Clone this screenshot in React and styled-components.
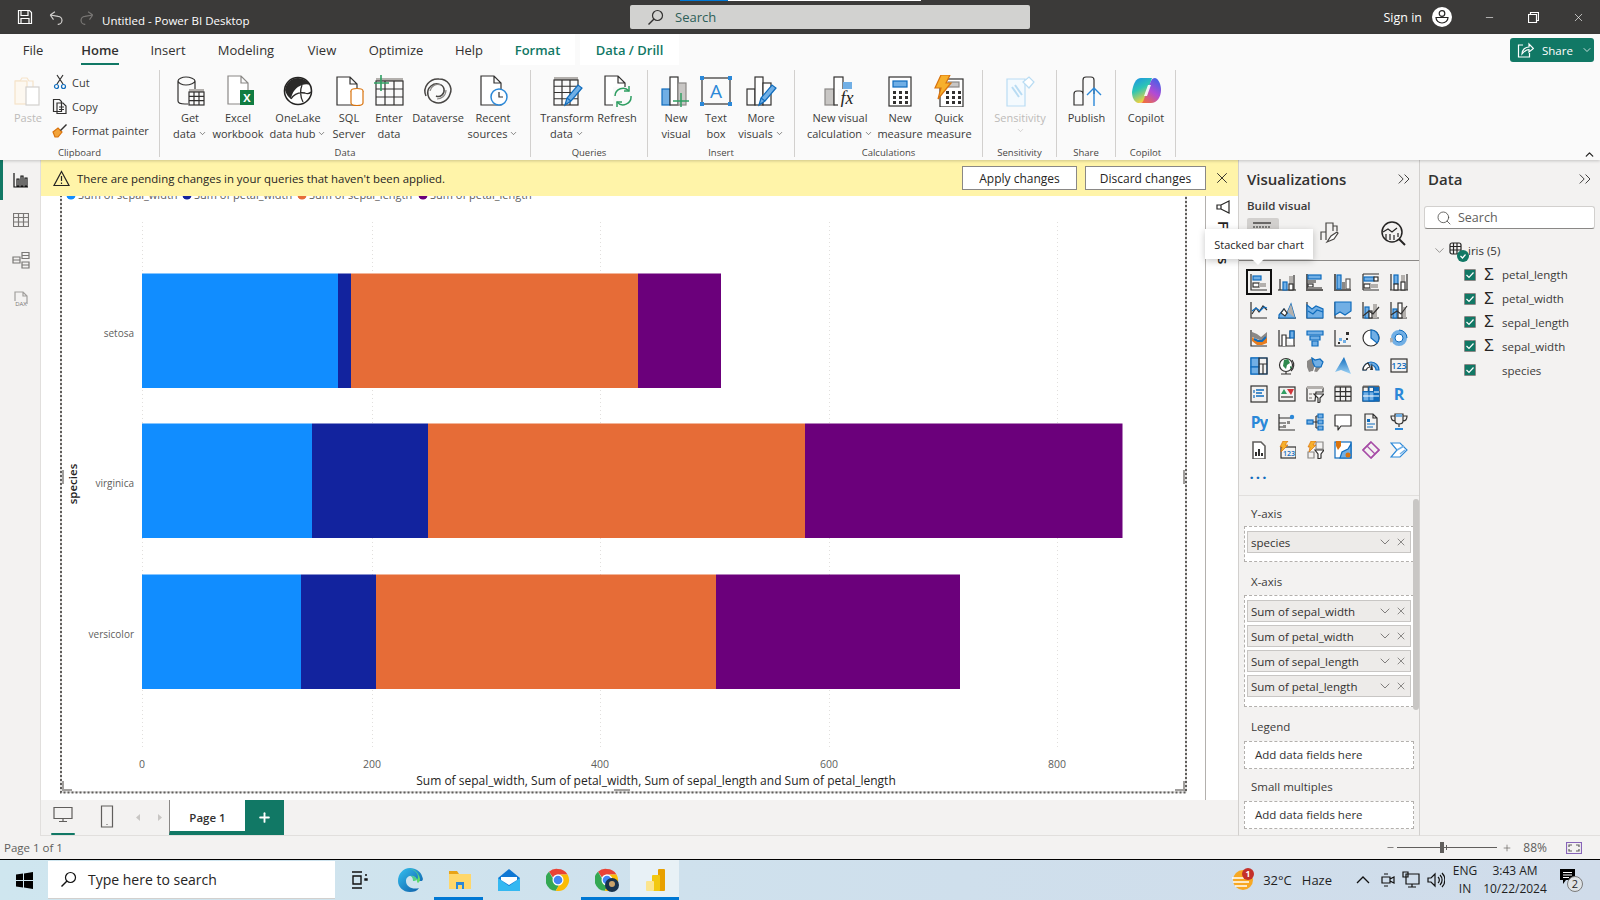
import React from 'react'
import styled, { createGlobalStyle } from 'styled-components'
import { X, ChevronDown, ChevronUp, ChevronsRight, Search, Minus, Plus } from 'lucide-react'

const TEAL = '#117865'
const D = '#323130'
const B = '#0f6cbd'
const L = '#71afe5'
const G = '#b3b0ad'
const O = '#d9730d'
const FONT = '"Open Sans", "Noto Sans", sans-serif'

const GlobalStyle = createGlobalStyle`
  html, body { margin: 0; padding: 0; height: 100%; overflow: hidden; }
  body { font-family: ${FONT}; color: #252423; background: #fff; }
  * { box-sizing: border-box; }
`

const Page = styled.div`
  width: 1600px;
  height: 900px;
  display: flex;
  flex-direction: column;
  overflow: hidden;
`

/* title bar */
const TitleBar = styled.header`
  height: 34px;
  flex: none;
  background: #3b3a39;
  display: flex;
  align-items: center;
  color: #fff;
  position: relative;
`
const TitleTools = styled.div`
  display: flex;
  align-items: center;
  gap: 15px;
  padding-left: 17px;
  width: 102px;
  flex: none;
`
const TitleText = styled.div`
  width: 528px;
  flex: none;
  font-size: 11.5px;
  padding-top: 6px;
`
const SearchBox = styled.div`
  width: 400px;
  height: 24px;
  flex: none;
  background: #d2d2d0;
  border-radius: 2px;
  color: #2d5f58;
  font-size: 13px;
  display: flex;
  align-items: center;
  gap: 11px;
  padding-left: 17px;
`
const Progress = styled.div`
  position: absolute;
  left: 680px;
  top: 0;
  width: 241px;
  height: 1px;
  background: linear-gradient(90deg, #0078d4 0 48px, #fff 48px);
`
const SignIn = styled.div`
  margin-left: auto;
  display: flex;
  align-items: center;
  font-size: 12.5px;
  gap: 10px;
`
const WinButtons = styled.div`
  display: flex;
  align-items: center;
  gap: 33px;
  margin-left: 32px;
  padding-right: 15px;
`

/* ribbon */
const Ribbon = styled.section`
  height: 126px;
  flex: none;
  background: #fafafa;
  position: relative;
  box-shadow: 0 1px 3px rgba(0, 0, 0, 0.2);
  z-index: 2;
`
const TabRow = styled.nav`
  display: flex;
  height: 31px;
`
const Tab = styled.div`
  width: ${(p) => p.$w}px;
  margin-left: ${(p) => p.$ml || 0}px;
  flex: none;
  display: flex;
  justify-content: center;
  font-size: 13px;
  background: ${(p) => (p.$accent ? '#fff' : 'transparent')};
  color: ${(p) => (p.$accent ? TEAL : '#323130')};
  font-weight: ${(p) => (p.$accent ? 600 : 400)};
`
const TabLabel = styled.span`
  height: 31px;
  line-height: 32px;
  font-weight: ${(p) => (p.$active ? 600 : 'inherit')};
  border-bottom: 2px solid ${(p) => (p.$active ? TEAL : 'transparent')};
`
const ShareButton = styled.div`
  position: absolute;
  left: 1510px;
  top: 4px;
  width: 84px;
  height: 24px;
  background: ${TEAL};
  border-radius: 3px;
  color: #fff;
  font-size: 11.5px;
  display: flex;
  align-items: center;
  gap: 8px;
  padding-left: 7px;
`
const Collapse = styled.div`
  position: absolute;
  left: 1583px;
  top: 110px;
  color: #252423;
`
const GroupRow = styled.div`
  display: flex;
  margin-top: 5px;
  height: 87px;
`
const Group = styled.div`
  width: ${(p) => p.$w}px;
  flex: none;
  border-right: 1px solid #d2d0ce;
  display: flex;
  flex-direction: column;
`
const GroupItems = styled.div`
  height: 77px;
  flex: none;
  display: flex;
  padding-left: ${(p) => p.$pad || 0}px;
`
const GroupLabel = styled.div`
  font-size: 9.5px;
  line-height: 11px;
  text-align: center;
  color: #484644;
  flex: none;
`
const RibbonBtn = styled.div`
  width: ${(p) => p.$w}px;
  flex: none;
  display: flex;
  flex-direction: column;
  align-items: center;
  padding-top: 5px;
  color: ${(p) => (p.$off ? '#bdbbb9' : '#3b3a39')};
`
const RibbonIcon = styled.div`
  height: 34.5px;
  flex: none;
  display: flex;
  align-items: flex-start;
`
const BtnLine = styled.div`
  font-size: 11px;
  line-height: 16px;
  white-space: nowrap;
  display: flex;
  align-items: center;
  gap: 2px;
`
const SmallCol = styled.div`
  display: flex;
  flex-direction: column;
  gap: 4px;
  padding: 2px 0 0 4px;
`
const SmallBtn = styled.div`
  height: 20px;
  display: flex;
  align-items: center;
  gap: 4px;
  font-size: 11px;
  color: #3b3a39;
  white-space: nowrap;
`

/* main */
const Body = styled.main`
  flex: 1;
  min-height: 0;
  display: flex;
`
const Rail = styled.aside`
  width: 41px;
  flex: none;
  background: #f3f2f1;
  border-right: 1px solid #e1dfdd;
  display: flex;
  flex-direction: column;
`
const RailItem = styled.div`
  height: 40px;
  display: flex;
  align-items: center;
  justify-content: center;
  border-left: 3px solid ${(p) => (p.$active ? TEAL : 'transparent')};
  padding-right: 2px;
`
const Center = styled.div`
  width: 1197px;
  flex: none;
  display: flex;
  flex-direction: column;
`
const Banner = styled.div`
  height: 36px;
  flex: none;
  background: #fff4a9;
  display: flex;
  align-items: center;
  padding-left: 12px;
  font-size: 11.4px;
`
const BannerText = styled.span`
  margin-left: 7px;
  width: 885px;
  flex: none;
`
const BannerBtn = styled.button`
  width: ${(p) => p.$w}px;
  height: 24px;
  flex: none;
  margin-right: 8px;
  background: #fff;
  border: 1px solid #8a8886;
  font: 12px ${FONT};
  color: #252423;
  padding: 0;
`
const BannerClose = styled.div`
  margin-left: -1px;
  display: flex;
`
const CanvasRow = styled.div`
  flex: 1;
  min-height: 0;
  display: flex;
  background: #fff;
`
const ChartSvg = styled.svg`
  width: 1164px;
  height: 604px;
  flex: none;
  display: block;
  font-family: ${FONT};
`
const FilterStrip = styled.div`
  flex: 1;
  border-left: 1px solid #b3b0ad;
  padding: 4px 0 0 10px;
  display: flex;
  flex-direction: column;
  align-items: flex-start;
  gap: 6px;
`
const FilterText = styled.div`
  writing-mode: vertical-rl;
  font-size: 14.5px;
  font-weight: 600;
  line-height: 15px;
  color: #252423;
`
const PageBar = styled.div`
  height: 36px;
  flex: none;
  background: #f3f2f1;
  border-bottom: 1px solid #e1dfdd;
  display: flex;
`
const ViewBtn = styled.div`
  width: 44px;
  flex: none;
  display: flex;
  flex-direction: column;
  align-items: center;
  padding-top: 5px;
`
const ViewMark = styled.div`
  width: 24px;
  height: 2px;
  margin-top: 8px;
  border-radius: 1px;
  background: ${TEAL};
`
const PageNav = styled.div`
  width: 40px;
  flex: none;
  display: flex;
  align-items: center;
  justify-content: center;
  gap: 14px;
`
const PageTab = styled.div`
  width: 76px;
  flex: none;
  background: #fff;
  border-left: 1px solid #8a8886;
  border-bottom: 4px solid ${TEAL};
  font-size: 11.5px;
  font-weight: 600;
  display: flex;
  align-items: center;
  justify-content: center;
  padding-top: 3px;
  color: #323130;
`
const AddPage = styled.div`
  width: 39px;
  flex: none;
  background: ${TEAL};
  color: #fff;
  display: flex;
  align-items: center;
  justify-content: center;
`

/* panes */
const Pane = styled.aside`
  width: 181px;
  flex: none;
  background: #f3f2f1;
  border-left: 1px solid #d2d0ce;
  border-bottom: 1px solid #e1dfdd;
  position: relative;
  overflow: hidden;
`
const PaneHead = styled.div`
  height: 38px;
  display: flex;
  align-items: center;
  justify-content: space-between;
  padding: 0 5px 0 8px;
  font-size: 15px;
  font-weight: 600;
  color: #323130;
`
const BuildTitle = styled.div`
  font-size: 11.5px;
  font-weight: 600;
  padding-left: 8px;
  color: #3b3a39;
  line-height: 16px;
`
const BuildTabs = styled.div`
  height: 47px;
  display: flex;
  align-items: flex-start;
  padding-top: 4px;
  border-bottom: 1px solid #8a8886;
`
const BuildTab = styled.div`
  width: ${(p) => p.$w}px;
  margin-left: ${(p) => p.$ml}px;
  height: 32px;
  flex: none;
  background: ${(p) => (p.$on ? '#d2d0ce' : 'transparent')};
  border-radius: 2px;
  display: flex;
  justify-content: center;
  padding-top: 2px;
`
const VizGrid = styled.div`
  display: grid;
  grid-template-columns: repeat(6, 28px);
  grid-auto-rows: 28px;
  padding: 7px 0 0 6px;
  height: 235px;
  border-bottom: 1px solid #e1dfdd;
`
const VizCell = styled.div`
  display: flex;
  align-items: center;
  justify-content: center;
`
const VizSelected = styled(VizCell)`
  outline: 2px solid #111;
  outline-offset: -3px;
`
const MoreDots = styled.div`
  grid-column: 1;
  font-size: 15px;
  font-weight: 700;
  letter-spacing: 2px;
  color: #0f6cbd;
  text-align: center;
  line-height: 18px;
`
const Wells = styled.div`
  padding: 9px 6px 0 5px;
`
const WellTitle = styled.div`
  font-size: 11.5px;
  line-height: 18px;
  padding-left: 7px;
  margin-bottom: ${(p) => p.$mb}px;
  color: #3b3a39;
`
const Well = styled.div`
  background: #fff;
  border: 1px dashed #b3b0ad;
  width: 170px;
  padding: 4px 2px 0;
  height: ${(p) => p.$h}px;
  margin-bottom: ${(p) => p.$mb}px;
`
const EmptyWell = styled(Well)`
  padding: 5px 0 0 10px;
  font-size: 11.5px;
  color: #323130;
  line-height: 16px;
`
const Chip = styled.div`
  height: 22px;
  margin-bottom: 3px;
  background: #edebe9;
  border: 1px solid #c8c6c4;
  display: flex;
  align-items: center;
  padding: 0 3px 0 3px;
  font-size: 11.5px;
  color: #323130;
`
const ChipName = styled.span`
  flex: 1;
  white-space: nowrap;
`
const ChipIcons = styled.span`
  display: flex;
  align-items: center;
  gap: 2px;
  color: #484644;
`
const ScrollThumb = styled.div`
  position: absolute;
  left: 174px;
  top: 339px;
  width: 6px;
  height: 211px;
  border-radius: 3px;
  background: #c8c6c4;
`
const DataSearch = styled.div`
  margin: 8px 5px 0 4px;
  height: 23px;
  background: #fff;
  border: 1px solid #d2d0ce;
  border-bottom-color: #8a8886;
  border-radius: 3px;
  display: flex;
  align-items: center;
  gap: 6px;
  padding-left: 11px;
  font-size: 12.5px;
  color: #605e5c;
`
const TreeHead = styled.div`
  display: flex;
  align-items: center;
  height: 25px;
  margin-top: 9px;
  padding-left: 12px;
  font-size: 11.5px;
  color: #323130;
`
const TableMark = styled.span`
  position: relative;
  width: 18px;
  height: 18px;
  margin: 0 1px 0 2px;
  display: block;
`
const TableBadge = styled.span`
  position: absolute;
  left: 8px;
  top: 8px;
  width: 12px;
  height: 12px;
  border-radius: 50%;
  background: ${TEAL};
  display: flex;
  align-items: center;
  justify-content: center;
`
const FieldRow = styled.div`
  display: flex;
  align-items: center;
  height: 23.8px;
  padding-left: 44px;
  font-size: 11.5px;
  color: #3b3a39;
`
const CheckMark = styled.span`
  width: 12px;
  height: 12px;
  background: ${TEAL};
  border: 1px solid #8a8886;
  border-radius: 1px;
  display: flex;
  align-items: center;
  justify-content: center;
  flex: none;
`
const Sigma = styled.span`
  width: 26px;
  text-align: center;
  font-family: "Liberation Sans", sans-serif;
  font-size: 16px;
  flex: none;
  color: #252423;
`

/* tooltip */
const Tooltip = styled.div`
  position: absolute;
  left: 1205px;
  top: 229px;
  width: 108px;
  height: 30px;
  background: #fff;
  box-shadow: 0 2px 7px rgba(0, 0, 0, 0.22);
  font-size: 11px;
  display: flex;
  align-items: center;
  justify-content: center;
  white-space: nowrap;
  z-index: 5;
  &::after {
    content: '';
    position: absolute;
    left: 47px;
    bottom: -6px;
    border: 6px solid transparent;
    border-bottom: 0;
    border-top-color: #fff;
  }
`

/* status bar */
const StatusBar = styled.footer`
  height: 23px;
  flex: none;
  background: #f3f2f1;
  display: flex;
  align-items: center;
  padding-left: 4px;
  font-size: 11.5px;
  color: #605e5c;
`
const ZoomArea = styled.div`
  margin-left: auto;
  display: flex;
  align-items: center;
  color: #605e5c;
`
const ZoomTrack = styled.div`
  width: 100px;
  height: 1px;
  margin: 0 5px 0 2px;
  background: #605e5c;
  position: relative;
  &::before {
    content: '';
    position: absolute;
    left: 43px;
    top: -5px;
    width: 4px;
    height: 11px;
    background: #605e5c;
  }
  &::after {
    content: '';
    position: absolute;
    left: 49px;
    top: -2px;
    width: 1px;
    height: 5px;
    background: #605e5c;
  }
`
const ZoomPct = styled.span`
  font-size: 12px;
  margin: 0 19px 0 11px;
`
const FitBtn = styled.span`
  display: flex;
  margin-right: 18px;
`

/* taskbar */
const Taskbar = styled.footer`
  height: 41px;
  flex: none;
  border-top: 1px solid #000;
  background: linear-gradient(90deg, #cfe6ef, #cfdfec 60%, #d0dcea);
  display: flex;
  align-items: stretch;
`
const StartBtn = styled.div`
  width: 48px;
  flex: none;
  display: flex;
  align-items: center;
  justify-content: center;
`
const TaskSearch = styled.div`
  width: 287px;
  flex: none;
  margin: 1px 0;
  background: #fff;
  display: flex;
  align-items: center;
  gap: 11px;
  padding-left: 12px;
  font-size: 14px;
  color: #252423;
  border-bottom: 1px solid #d2d0ce;
`
const TaskIcon = styled.div`
  width: 49px;
  flex: none;
  display: flex;
  align-items: center;
  justify-content: center;
  margin-left: ${(p) => p.$ml || 0}px;
  padding-right: ${(p) => p.$pr || 0}px;
  padding-left: ${(p) => p.$pl || 0}px;
  background: ${(p) => (p.$active ? '#e8f1f6' : 'transparent')};
  border-bottom: 3px solid ${(p) => (p.$on ? '#0078d4' : 'transparent')};
  border-top: 3px solid transparent;
`
const Tray = styled.div`
  margin-left: auto;
  display: flex;
  align-items: center;
  font-size: 13px;
  color: #1f1f1f;
`
const TrayText = styled.span`
  margin-left: ${(p) => p.$ml}px;
  white-space: nowrap;
`
const TrayIcon = styled.span`
  display: flex;
  margin-left: ${(p) => p.$ml}px;
`
const Clock = styled.div`
  width: ${(p) => p.$w}px;
  margin-left: ${(p) => p.$ml}px;
  flex: none;
  font-size: 12px;
  line-height: 18px;
  text-align: center;
  white-space: nowrap;
`
const NoteBadge = styled.span`
  position: absolute;
  left: 8px;
  top: 8px;
  width: 16px;
  height: 16px;
  border-radius: 50%;
  background: #dfe3e6;
  border: 1px solid #7a7a7a;
  font-size: 11px;
  line-height: 14px;
  text-align: center;
`
const NoteWrap = styled.span`
  position: relative;
  width: 24px;
  height: 24px;
  margin: 0 17px 0 11px;
  display: block;
`

/* small svg helper */
const Ic = ({ s = 32, vb = 32, children, ...rest }) => (
  <svg width={s} height={s} viewBox={`0 0 ${vb} ${vb}`} fill="none" strokeWidth="1.2" {...rest}>
    {children}
  </svg>
)

const Grid = ({ x, y, w, h, c = 3, r = 3, stroke = D, head }) => {
  const lines = []
  for (let i = 1; i < c; i++) lines.push(`M${x + (w * i) / c} ${y}v${h}`)
  for (let i = 1; i < r; i++) lines.push(`M${x} ${y + (h * i) / r}h${w}`)
  return (
    <g stroke={stroke}>
      {head && <rect x={x} y={y - 3} width={w} height="3" fill={G} stroke="none" />}
      <rect x={x} y={y} width={w} height={h} />
      <path d={lines.join('')} />
    </g>
  )
}

const Doc = ({ x = 6, y = 2, w = 18, h = 27, stroke = D }) => (
  <path
    d={`M${x} ${y}h${w - 7}l7 7v${h - 7}h-${w}zM${x + w - 7} ${y}v7h7`}
    stroke={stroke}
    fill="#fff"
  />
)

const Pencil = () => (
  <g>
    <path d="M14 30l2-7L27 10l4 3-11 13z" fill={L} stroke={B} />
    <path d="M16 23l4 3" stroke={B} />
  </g>
)

const CopilotLogo = () => (
  <Ic>
    <defs>
      <linearGradient id="cpA" x1="0" y1="0" x2="0.4" y2="1">
        <stop offset="0" stopColor="#1b8fe8" />
        <stop offset="0.5" stopColor="#2cc5b5" />
        <stop offset="1" stopColor="#f6d23c" />
      </linearGradient>
      <linearGradient id="cpB" x1="0.8" y1="0" x2="0.2" y2="1">
        <stop offset="0" stopColor="#3f63e6" />
        <stop offset="0.5" stopColor="#b14ad6" />
        <stop offset="1" stopColor="#f2703c" />
      </linearGradient>
    </defs>
    <path d="M11 3h11l-7 21c-1 3-3 4-6 4H8c-4-1-6-6-6-11C3 9 6 3 11 3z" fill="url(#cpA)" />
    <path d="M21 28H10c2 0 3-1 4-4l7-18c1-2 2-3 4-3 4 1 6 7 6 12 0 7-4 13-10 13z" fill="url(#cpB)" />
    <path d="M14 21l4-11h3l-4 11z" fill="#fff" opacity="0.9" />
  </Ic>
)

const RIBBON = {
  paste: (
    <Ic>
      <path d="M3 6h5l2-3h5l2 3h4v6" stroke="#f6e3c9" />
      <rect x="3" y="6" width="12" height="23" stroke="#f6e3c9" fill="#fdf8f0" />
      <rect x="14" y="12" width="13" height="18" stroke="#d2d0ce" fill="#fff" />
    </Ic>
  ),
  get: (
    <Ic>
      <path d="M4 6v20c0 2 3 3 7 3h3M4 6c0-2 4-4 8-4s9 2 9 4-5 4-9 4-8-2-8-4zM21 6v9" stroke={D} />
      <Grid x={15} y={17} w={15} h={13} c={3} r={3} head />
    </Ic>
  ),
  excel: (
    <Ic>
      <Doc x={6} y={1} w={20} h={28} stroke="#8a8886" />
      <rect x="18" y="15" width="14" height="15" fill="#107c41" />
      <text x="25" y="27" fontSize="11" fontWeight="700" fill="#fff" textAnchor="middle">X</text>
    </Ic>
  ),
  lake: (
    <Ic>
      <circle cx="16" cy="16" r="13.5" stroke="#252423" strokeWidth="1.6" fill="#fff" />
      <path d="M16 3C9 3 4 8 3 15c1 4 3 7 6 9 1-7 5-12 11-14 3-1 6-1 8 0-2-4-7-7-12-7z" fill="#2b2a29" />
      <path d="M9 24c3-5 8-7 14-6M23 18c2 1 4 1 6-1M20 10c-2 5-2 11 1 17" stroke="#2b2a29" strokeWidth="1.3" />
    </Ic>
  ),
  sql: (
    <Ic>
      <Doc x={4} y={2} w={20} h={28} />
      <ellipse cx="24" cy="16" rx="6" ry="2.5" fill="#fff" stroke={O} />
      <path d="M18 16v12c0 1.5 3 2.5 6 2.5s6-1 6-2.5V16" stroke={O} fill="#fff" />
    </Ic>
  ),
  enter: (
    <Ic>
      <Grid x={3} y={6} w={27} h={24} c={3} r={3} head />
      <path d="M8 0v16M1 8h15" stroke="#2f9e62" strokeWidth="1.6" />
    </Ic>
  ),
  dataverse: (
    <Ic>
      <path d="M4 21C0 12 8 3 17 4c9 0 14 8 11 15-2 7-10 11-16 8-6-2-9-11-3-16 5-4 12-2 13 3 1 5-4 9-8 7" stroke="#484644" strokeWidth="1.5" />
      <path d="M8 16c1-5 6-8 11-6M24 15c0 6-5 9-9 9" stroke="#8a8886" />
    </Ic>
  ),
  recent: (
    <Ic>
      <Doc x={4} y={1} w={20} h={29} />
      <circle cx="22" cy="22" r="8" fill="#fff" stroke="#2b88d8" strokeWidth="1.5" />
      <path d="M22 17v5h4" stroke={D} />
    </Ic>
  ),
  transform: (
    <Ic>
      <Grid x={3} y={5} w={24} h={25} c={3} r={4} head />
      <Pencil />
    </Ic>
  ),
  refresh: (
    <Ic>
      <Doc x={4} y={1} w={20} h={29} />
      <rect x="12" y="12" width="20" height="20" fill="#fafafa" />
      <path d="M14 21a8 8 0 0 1 14-5M30 21a8 8 0 0 1-14 6" stroke="#2f9e62" strokeWidth="1.5" />
      <path d="M28 11v5h-5M16 32v-5h5" stroke="#2f9e62" strokeWidth="1.5" />
    </Ic>
  ),
  newVisual: (
    <Ic>
      <rect x="2" y="14" width="8" height="16" fill={L} stroke={B} />
      <rect x="10" y="2" width="8" height="28" fill="#fff" stroke={D} />
      <rect x="18" y="8" width="8" height="22" fill="#c8c6c4" stroke="#8a8886" />
      <path d="M21 18v16M13 26h16" stroke="#2f9e62" strokeWidth="1.5" />
    </Ic>
  ),
  textBox: (
    <Ic>
      <rect x="2" y="3" width="28" height="26" stroke={D} />
      <path d="M0 1h4v4H0zM28 1h4v4h-4zM0 27h4v4H0zM28 27h4v4h-4z" fill="#2b88d8" stroke="none" />
      <text x="16" y="23" fontSize="19" fill="#2b88d8" textAnchor="middle">A</text>
    </Ic>
  ),
  more: (
    <Ic>
      <rect x="2" y="14" width="8" height="16" stroke={D} />
      <rect x="10" y="2" width="8" height="28" stroke={D} fill="#fff" />
      <rect x="18" y="8" width="8" height="22" stroke={D} fill="#fff" />
      <Pencil />
    </Ic>
  ),
  calc: (
    <Ic>
      <rect x="1" y="14" width="9" height="16" fill="#c8c6c4" stroke="#8a8886" />
      <rect x="10" y="2" width="9" height="28" fill="#fff" stroke={D} />
      <rect x="19" y="7" width="9" height="23" fill={L} stroke="none" />
      <rect x="14" y="14" width="18" height="18" fill="#fafafa" />
      <text x="23" y="29" fontFamily="Liberation Serif, serif" fontStyle="italic" fontSize="18" fill="#252423" textAnchor="middle">fx</text>
    </Ic>
  ),
  measure: (
    <Ic>
      <rect x="5" y="2" width="22" height="29" stroke={D} fill="#fff" />
      <rect x="9" y="6" width="14" height="6" fill={L} stroke={B} />
      <path d="M9 16h3v3H9zM15 16h3v3h-3zM21 16h3v3h-3zM9 21h3v3H9zM15 21h3v3h-3zM21 21h3v3h-3zM9 26h3v3H9zM15 26h3v3h-3zM21 26h3v3h-3z" fill={D} />
    </Ic>
  ),
  quick: (
    <Ic>
      <rect x="7" y="4" width="23" height="28" stroke={D} fill="#fff" />
      <rect x="15" y="7" width="11" height="5" fill="#c8c6c4" stroke="#8a8886" />
      <path d="M13 16h3v3h-3zM19 16h3v3h-3zM25 16h3v3h-3zM13 21h3v3h-3zM19 21h3v3h-3zM25 21h3v3h-3zM13 26h3v3h-3zM19 26h3v3h-3zM25 26h3v3h-3z" fill={D} />
      <path d="M8 0h9l-4 8h5L5 24l3-11H2z" fill="#f7b02c" stroke={O} />
    </Ic>
  ),
  sense: (
    <Ic>
      <path d="M3 4h18v27H3z" stroke="#b9dcf3" fill="#f4fafe" />
      <path d="M8 12l7 10M11 10l7 10" stroke="#b9dcf3" strokeWidth="2" />
      <path d="M19 7l6-5 5 5-5 6z" stroke="#b9dcf3" fill="#fff" />
    </Ic>
  ),
  publish: (
    <Ic>
      <path d="M3 30V19c0-2 1-3 3-3h3c2 0 3 1 3 3v11zM12 30V5c0-2 1-3 3-3h5c2 0 3 1 3 3v14" stroke={D} />
      <path d="M23 14v17M16 20l7-7 7 7" stroke="#2b88d8" strokeWidth="1.4" />
    </Ic>
  ),
}

const RibbonButton = ({ w, icon, lines, menu, off, chevronOnly }) => (
  <RibbonBtn $w={w} $off={off}>
    <RibbonIcon>{RIBBON[icon] || <CopilotLogo />}</RibbonIcon>
    {lines.map((l, i) => (
      <BtnLine key={i}>
        {l}
        {menu && i === lines.length - 1 && <ChevronDown size={9} strokeWidth={1.6} />}
      </BtnLine>
    ))}
    {chevronOnly && <BtnLine><ChevronDown size={9} strokeWidth={1.6} /></BtnLine>}
  </RibbonBtn>
)

const GROUPS = [
  {
    w: 371, pad: 8, label: 'Data',
    items: [
      [44, 'get', ['Get', 'data'], true],
      [52, 'excel', ['Excel', 'workbook']],
      [68, 'lake', ['OneLake', 'data hub'], true],
      [34, 'sql', ['SQL', 'Server']],
      [46, 'enter', ['Enter', 'data']],
      [52, 'dataverse', ['Dataverse']],
      [58, 'recent', ['Recent', 'sources'], true],
    ],
  },
  {
    w: 117, pad: 6, label: 'Queries',
    items: [
      [60, 'transform', ['Transform', 'data'], true],
      [40, 'refresh', ['Refresh']],
    ],
  },
  {
    w: 147, pad: 8, label: 'Insert',
    items: [
      [40, 'newVisual', ['New', 'visual']],
      [40, 'textBox', ['Text', 'box']],
      [50, 'more', ['More', 'visuals'], true],
    ],
  },
  {
    w: 188, pad: 8, label: 'Calculations',
    items: [
      [74, 'calc', ['New visual', 'calculation'], true],
      [46, 'measure', ['New', 'measure']],
      [52, 'quick', ['Quick', 'measure']],
    ],
  },
  { w: 74, pad: 0, label: 'Sensitivity', items: [[74, 'sense', ['Sensitivity'], false, true]] },
  { w: 59, pad: 0, label: 'Share', items: [[59, 'publish', ['Publish']]] },
  { w: 60, pad: 0, label: 'Copilot', items: [[60, 'copilot', ['Copilot']]] },
]

const TABS = [
  ['File', 66], ['Home', 68, 'active'], ['Insert', 68], ['Modeling', 88], ['View', 64],
  ['Optimize', 84], ['Help', 62], ['Format', 75, 'accent'], ['Data / Drill', 99, 'accent', 5],
]

const Axis = () => <path d="M1 1v16h16" stroke={D} />

const VIZ = [
  <><Axis /><rect x="3" y="3" width="8" height="4" fill={L} stroke={B} /><rect x="3" y="10" width="6" height="4" fill="#fff" stroke={D} /><rect x="9" y="10" width="7" height="4" fill={G} /></>,
  <><path d="M0 17h18" stroke={D} /><path d="M2 6v11M16 2v15" stroke={D} /><rect x="5" y="9" width="4" height="8" fill={L} stroke={B} /><rect x="11" y="3" width="4" height="8" fill={G} /><rect x="11" y="11" width="4" height="6" fill="#fff" stroke={D} /></>,
  <><path d="M1 1v16h16" stroke="#605e5c" strokeWidth="2" /><rect x="2" y="2" width="13" height="4" fill={L} stroke={B} /><rect x="2" y="7" width="8" height="3" fill="#8a8886" /><rect x="2" y="11" width="5" height="3" fill="#fff" stroke={D} /><rect x="2" y="14" width="14" height="2" fill="#8a8886" /></>,
  <><path d="M1 1v16h16" stroke="#605e5c" strokeWidth="2" /><rect x="3" y="2" width="4" height="14" fill={L} stroke={B} /><rect x="8" y="9" width="3" height="7" fill="#8a8886" /><rect x="12" y="6" width="4" height="10" fill="#fff" stroke="#605e5c" /></>,
  <><path d="M1 1h16M1 17h16" stroke={D} /><path d="M1 1v16" stroke={D} /><rect x="2" y="4" width="10" height="4" fill={L} stroke={B} /><rect x="12" y="4" width="4" height="4" fill="#fff" stroke={D} /><rect x="2" y="11" width="6" height="4" fill="#fff" stroke={D} /><rect x="8" y="11" width="8" height="4" fill={G} /></>,
  <><path d="M0 17h18M1 1v16M17 1v16" stroke={D} /><rect x="4" y="2" width="4" height="9" fill={L} stroke={B} /><rect x="4" y="11" width="4" height="6" fill="#fff" stroke={D} /><rect x="11" y="2" width="4" height="7" fill={G} /><rect x="11" y="9" width="4" height="8" fill="#fff" stroke={D} /></>,
  <><Axis /><path d="M2 13l4-6 3 4 4-6 4 4" stroke={D} /><path d="M2 10l4-3 4 3 4-4 3 1" stroke={B} /></>,
  <><path d="M0 17h18" stroke={D} /><path d="M1 14l5-6 3 4 4-9 4 14H1z" fill={L} stroke={B} /><path d="M6 8l3 4 4-9 4 14" fill={G} /><path d="M3 12l3-4 3 4-2 3z" fill="#fff" stroke={D} /></>,
  <><Axis /><path d="M1 4l5 4 4-3 7 3v9H1z" fill={L} stroke={B} /><path d="M2 10l5 3 4-4 6 2" stroke={B} /></>,
  <><Axis /><path d="M1 1h16v9l-6 4-5-3-5 3z" fill={L} stroke={B} /></>,
  <><path d="M1 1v16h16" stroke={D} /><rect x="3" y="6" width="4" height="11" fill={L} stroke={B} /><rect x="11" y="3" width="4" height="14" fill={G} /><rect x="7" y="10" width="3" height="7" fill="#fff" stroke={D} /><path d="M1 15l6-5 4 3 6-7" stroke={D} /></>,
  <><path d="M1 1v16h16" stroke={D} /><rect x="3" y="8" width="4" height="9" fill={L} stroke={B} /><rect x="8" y="2" width="4" height="15" fill="#fff" stroke={D} /><rect x="13" y="6" width="3" height="11" fill={G} /><path d="M1 14l6-4 4 3 6-8" stroke={D} /></>,
  <><path d="M1 1v16h16" stroke={D} /><path d="M2 3l5 2 4 3 6-5v5l-5 4-5-2-5-2z" fill="#8a8886" /><path d="M2 8l4 3 5 1 6-4v6l-5 2H7l-5-4z" fill="#e87d1e" /><path d="M4 10l4 2 4 0 4-4" stroke={B} strokeWidth="2" /></>,
  <><path d="M1 1v16h16" stroke={D} /><path d="M4 17V6h4v11M8 9h4V2h4v15M4 6h4" stroke={D} fill="#fff" /><rect x="12" y="2" width="4" height="7" fill={L} stroke={B} /></>,
  <><path d="M1 2h16v4H1z" fill={L} stroke={B} /><path d="M4 7h10v4H4z" fill={L} stroke={B} /><path d="M6 12h6v5H6z" fill={L} stroke={B} /></>,
  <><Axis /><path d="M5 9h3v3H5zM9 11h3v3H9z" fill={L} /><path d="M12 3h3v3h-3z" fill={D} /><path d="M4 13h2v2H4zM12 9h2v2h-2z" fill={D} /></>,
  <><circle cx="9" cy="9" r="8" fill="#fff" stroke={D} /><path d="M9 9V1a8 8 0 0 1 6 13z" fill={L} stroke={B} /></>,
  <><circle cx="9" cy="9" r="6" stroke={L} strokeWidth="4" /><path d="M9 1a8 8 0 0 1 8 8" stroke={B} strokeWidth="1" /><circle cx="9" cy="9" r="4" stroke={B} strokeWidth="1" fill="#fff" /><path d="M2 13a8 8 0 0 1-1-4" stroke={G} strokeWidth="3" /></>,
  <><rect x="1" y="1" width="16" height="16" stroke={B} /><rect x="1" y="1" width="8" height="9" fill={L} stroke={B} /><rect x="1" y="10" width="8" height="7" fill={L} stroke={B} /><path d="M9 7h8M13 7v10" stroke={D} /><path d="M9 1h8v16H9z" stroke={D} /></>,
  <><circle cx="8" cy="8" r="6.5" fill="#fff" stroke={D} /><path d="M6 3l4-1 2 4-3 2-1 4-3-3z" fill="#2f8a4e" /><path d="M12 9l2 1-2 2z" fill="#2f8a4e" /><path d="M3 17h10M8 15v2M14 3a8 8 0 0 1-1 11" stroke={D} /></>,
  <><path d="M1 4l5-3 3 2 5-1 3 3-2 5-4 5-5-1-3 1-2-5z" fill="#8a8886" /><path d="M6 1l3 2 5-1 3 3-2 5H9L7 6z" fill={L} stroke={B} /><path d="M9 10l-2 6" stroke="#fff" /></>,
  <><defs><linearGradient id="azm" x1="0" y1="0" x2="0" y2="1"><stop offset="0" stopColor="#0f6cbd" /><stop offset="1" stopColor="#9fd3f5" /></linearGradient></defs><path d="M10 0L1 15l6-2 10 4z" fill="url(#azm)" /></>,
  <><path d="M1 13a8 8 0 0 1 16 0h-3a5 5 0 0 0-10 0z" fill={L} stroke={B} /><path d="M1 13a8 8 0 0 1 5-7l2 4a5 5 0 0 0-4 3z" fill="#fff" stroke={D} /><path d="M8 13l2-7 1 7z" fill={D} /></>,
  <><rect x="1" y="2" width="16" height="13" stroke={D} /><text x="9" y="12" fontSize="9" fontWeight="600" fill={B} textAnchor="middle">123</text></>,
  <><rect x="1" y="1" width="16" height="16" stroke={D} /><path d="M4 5v3M4 10v3" stroke={B} strokeWidth="1.2" /><path d="M6 5h8M6 8h6M6 11h8" stroke={B} strokeWidth="1.5" /></>,
  <><rect x="1" y="2" width="16" height="14" stroke={D} /><path d="M3 9l3-5 3 5z" fill="#2f9e62" /><path d="M9 4h7l-3 6z" fill="#d13438" /><path d="M3 12h12" stroke={D} /></>,
  <><path d="M1 3h16v4H10l-1 9H1z" stroke={D} /><path d="M1 1h16v3H1z" fill={G} /><path d="M3 8h3v2H3zM3 12h3v2H3z" fill={G} /><path d="M8 9h10l-4 4v4l-2 1v-5z" fill="#fff" stroke={D} /></>,
  <><Grid x={1} y={2} w={16} h={14} c={3} r={3} stroke={D} head /></>,
  <><Grid x={1} y={2} w={16} h={14} c={3} r={3} stroke={D} head /><rect x="1" y="6.7" width="16" height="9.3" fill={L} stroke={B} /><rect x="7" y="2" width="5" height="14" fill="none" stroke={B} /><rect x="12" y="2" width="5" height="14" fill={B} /><path d="M12 7h5M12 11h5M1 11h11" stroke="#fff" /></>,
  <><text x="9" y="15" fontSize="16" fontWeight="700" fill="#2b88d8" textAnchor="middle">R</text></>,
  <><text x="9" y="15" fontSize="15.5" fontWeight="700" fill="#2b88d8" textAnchor="middle" letterSpacing="-1">Py</text></>,
  <><path d="M1 1v16h16M1 5h12M1 10h7M1 14h4" stroke={D} /><circle cx="14" cy="4" r="2.2" fill="#2b88d8" /><rect x="9" y="8" width="3" height="3" fill="#8a8886" /><rect x="5" y="12" width="3" height="3" fill="#8a8886" /></>,
  <><rect x="1" y="7" width="6" height="4" fill={L} stroke={B} /><path d="M7 9h3M10 3v12M10 3h2M10 9h2M10 15h2" stroke={D} /><path d="M12 1h5v4h-5zM12 7h5v4h-5zM12 13h5v4h-5z" fill={L} stroke={B} /></>,
  <><path d="M1 2h16v11H7l-3 4v-4H1z" fill="#fff" stroke={D} strokeLinejoin="round" /></>,
  <><path d="M3 1h8l4 4v12H3zM11 1v4h4" stroke={D} /><path d="M5 6h3v3H5z" fill={B} /><path d="M5 11h8M5 14h6" stroke={B} /></>,
  <><path d="M5 1h8v7c0 2-2 3-4 3s-4-1-4-3zM5 3H1c0 3 1 5 4 5M13 3h4c0 3-1 5-4 5M9 11v3" stroke={D} /><path d="M6 1h6v3H6z" fill={L} /><path d="M5 15h8v2H5z" fill="#2b88d8" /></>,
  <><path d="M3 1h8l4 4v13H3z" fill="#fff" stroke="#605e5c" strokeWidth="1.6" /><path d="M5 15V11h2v4zM8 15V8h2v7zM11 15v-3h2v3z" fill={D} /></>,
  <><rect x="3" y="6" width="15" height="11" stroke={D} /><text x="11" y="15" fontSize="7" fontWeight="600" fill={B} textAnchor="middle">123</text><path d="M5 0h5L7 4h3L3 11l1-5H2z" fill="#f7b02c" stroke={O} strokeWidth="0.7" /></>,
  <><path d="M10 1h7v7h-7zM2 11h6v6H2z" stroke="#8a8886" /><path d="M9 9h9l-3 4v4l-3 1v-5z" fill="#fff" stroke={D} /><path d="M5 0h5L7 4h3L3 11l1-5H2z" fill="#f7b02c" stroke={O} strokeWidth="0.7" /></>,
  <><rect x="1" y="1" width="16" height="16" stroke={B} fill="#fff" /><path d="M6 17l2-6 6-3 3-5v14z" fill={L} stroke={B} /><path d="M2 0h5v5L4 9 2 5z" fill={O} /><circle cx="14" cy="14" r="2.5" fill={O} /></>,
  <><path d="M9 1l8 8-8 8-8-8z" stroke="#a64ca6" strokeWidth="1.6" /><path d="M9 1l-4 4 8 8 4-4M9 17l4-4L5 5 1 9" stroke="#a64ca6" /></>,
  <><path d="M1 2h9l7 7-7 7H1l6-7z" stroke="#2b88d8" strokeWidth="1.2" fill="#fff" /><path d="M7 9l7-4M10 13l5-4" stroke={L} strokeWidth="1.5" /></>,
]

const CHART_BARS = [
  { y: 273.5, name: 'setosa', stops: [142, 338, 351, 638, 721] },
  { y: 423.5, name: 'virginica', stops: [142, 312, 428, 805, 1122.5] },
  { y: 574.5, name: 'versicolor', stops: [142, 301, 376, 716, 960] },
]
const SERIES = ['#118dff', '#12239e', '#e66c37', '#6b007b']
const LEGEND = [
  [71, 'Sum of sepal_width'],
  [187, 'Sum of petal_width'],
  [302, 'Sum of sepal_length'],
  [423, 'Sum of petal_length'],
]
const TICKS = [[142, 0], [372, 200], [600, 400], [829, 600], [1057, 800]]
const X_FIELDS = ['Sum of sepal_width', 'Sum of petal_width', 'Sum of sepal_length', 'Sum of petal_length']
const FIELDS = ['petal_length', 'petal_width', 'sepal_length', 'sepal_width', 'species']

const Chart = () => (
  <ChartSvg viewBox="41 196 1164 604">
    {TICKS.map(([x]) => (
      <line key={x} x1={x + 0.5} x2={x + 0.5} y1="222" y2="750" stroke="#e1dfdd" strokeDasharray="1 3" />
    ))}
    {LEGEND.map(([x, label], i) => (
      <g key={label}>
        <circle cx={x} cy="195" r="4.5" fill={SERIES[i]} />
        <text x={x + 7} y="199" fontSize="11" fill="#605e5c">{label}</text>
      </g>
    ))}
    {CHART_BARS.map((bar) => (
      <g key={bar.name}>
        <text x="134" y={bar.y + 63.5} fontSize="10" fill="#605e5c" textAnchor="end">{bar.name}</text>
        {SERIES.map((c, i) => (
          <rect key={c} x={bar.stops[i]} y={bar.y} width={bar.stops[i + 1] - bar.stops[i]} height="114.5" fill={c} />
        ))}
      </g>
    ))}
    {TICKS.map(([x, v]) => (
      <text key={v} x={x} y="768" fontSize="10.5" fill="#605e5c" textAnchor="middle">{v}</text>
    ))}
    <text x="656" y="785" fontSize="12" fill="#252423" textAnchor="middle">
      Sum of sepal_width, Sum of petal_width, Sum of sepal_length and Sum of petal_length
    </text>
    <text transform="translate(77 484) rotate(-90)" fontSize="11.5" fontWeight="600" fill="#252423" textAnchor="middle">species</text>
    <rect x="61" y="190" width="1125" height="602" fill="none" stroke="#c8c6c4" />
    <rect x="61" y="190" width="1125" height="602.5" fill="none" stroke="#605e5c" strokeWidth="2" strokeDasharray="2 2" />
    <path d="M63 470v14M1184 470v14M614 790h16M1184 781v9h-9M63 781v9h9" stroke="#a19f9d" strokeWidth="2" fill="none" />
  </ChartSvg>
)

const Chrome = ({ badge }) => (
  <Ic s={24} vb={24}>
    <path d="M12 1a11 11 0 0 1 9.5 5.5H12a5.5 5.5 0 0 0-5 3L3 3.8A11 11 0 0 1 12 1z" fill="#ea4335" />
    <path d="M3 3.8l5 8.7a5 5 0 0 0 5 5L9.7 22.8A11 11 0 0 1 3 3.8z" fill="#34a853" />
    <path d="M21.5 6.5A11 11 0 0 1 9.7 22.8l4.8-8.3a5 5 0 0 0-.5-8z" fill="#fbbc04" />
    <circle cx="12" cy="12" r="5.5" fill="#fff" />
    <circle cx="12" cy="12" r="4.3" fill="#4285f4" />
    {badge && <circle cx="17" cy="17" r="7" fill="#17324d" />}
    {badge && <circle cx="17" cy="16" r="3" fill="#c9a26a" />}
  </Ic>
)

export default function App() {
  return (
    <Page>
      <GlobalStyle />
      <TitleBar>
        <Progress />
        <TitleTools>
          <Ic s={16} vb={16} stroke="#fff">
            <path d="M1.5 1.5h11l2 2v11h-13zM4 1.5v5h7v-5M4 14.5v-5h8v5" />
          </Ic>
          <Ic s={16} vb={16} stroke="#d2d0ce">
            <path d="M2 7l4-4M2 7l4 4M2 7h8a4 4 0 0 1 1 8" transform="rotate(10 8 8)" />
          </Ic>
          <Ic s={16} vb={16} stroke="#797775">
            <path d="M14 7l-4-4M14 7l-4 4M14 7H6a4 4 0 0 0-1 8" transform="rotate(-10 8 8)" />
          </Ic>
        </TitleTools>
        <TitleText>Untitled - Power BI Desktop</TitleText>
        <SearchBox>
          <Ic s={17} vb={17} stroke="#323130">
            <circle cx="10.5" cy="6.5" r="5" />
            <path d="M7 10l-5.5 5.5" strokeWidth="1.5" />
          </Ic>
          Search
        </SearchBox>
        <SignIn>
          Sign in
          <Ic s={20} vb={20}>
            <circle cx="10" cy="10" r="10" fill="#fff" />
            <circle cx="10" cy="6.5" r="2.8" stroke="#252423" />
            <path d="M4 10.5h12c0 3-2.5 5.5-6 5.5s-6-2.5-6-5.5z" stroke="#252423" />
          </Ic>
        </SignIn>
        <WinButtons>
          <Minus size={11} strokeWidth={1.3} />
          <Ic s={11} vb={11} stroke="#fff">
            <path d="M.5 2.5h8v8h-8zM2.5 2.5v-2h8v8h-2" />
          </Ic>
          <X size={13} strokeWidth={1.2} />
        </WinButtons>
      </TitleBar>

      <Ribbon>
        <TabRow>
          {TABS.map(([label, w, kind, ml]) => (
            <Tab key={label} $w={w} $ml={ml} $accent={kind === 'accent'}>
              <TabLabel $active={kind === 'active'}>{label}</TabLabel>
            </Tab>
          ))}
        </TabRow>
        <ShareButton>
          <Ic s={17} vb={17} stroke="#fff">
            <path d="M6 3H1.5v12h11v-4M5 12c0-4 3-7 7-7V2l4.5 4.5L12 10V7.5c-3 0-5 2-7 4.5z" />
          </Ic>
          Share
          <ChevronDown size={12} strokeWidth={1.5} />
        </ShareButton>
        <GroupRow>
          <Group $w={160}>
            <GroupItems $pad={8}>
              <RibbonButton w={40} icon="paste" lines={['Paste']} off />
              <SmallCol>
                <SmallBtn>
                  <Ic s={16} vb={16}>
                    <path d="M5 1l6 9M11 1L5 10" stroke={D} />
                    <circle cx="4.5" cy="12.5" r="2" stroke={B} />
                    <circle cx="11.5" cy="12.5" r="2" stroke={B} />
                  </Ic>
                  Cut
                </SmallBtn>
                <SmallBtn>
                  <Ic s={16} vb={16} stroke={D}>
                    <path d="M1.5 1.5h6l2 2v10h-8zM5 5h6l3 3v7.5H5zM7 9h5M7 11.5h5" fill="#fafafa" />
                  </Ic>
                  Copy
                </SmallBtn>
                <SmallBtn>
                  <Ic s={16} vb={16}>
                    <path d="M1 10l5-4 4 4-4 5H3z" fill="#f2a33a" stroke={O} />
                    <path d="M8 8l6-6 1 1-6 6z" fill={D} />
                  </Ic>
                  Format painter
                </SmallBtn>
              </SmallCol>
            </GroupItems>
            <GroupLabel>Clipboard</GroupLabel>
          </Group>
          {GROUPS.map((g) => (
            <Group key={g.label} $w={g.w}>
              <GroupItems $pad={g.pad}>
                {g.items.map(([w, icon, lines, menu, off]) => (
                  <RibbonButton key={icon} w={w} icon={icon} lines={lines} menu={menu} off={off} chevronOnly={off} />
                ))}
              </GroupItems>
              <GroupLabel>{g.label}</GroupLabel>
            </Group>
          ))}
        </GroupRow>
        <Collapse>
          <ChevronUp size={13} strokeWidth={2.4} />
        </Collapse>
      </Ribbon>

      <Body>
        <Rail>
          <RailItem $active>
            <Ic s={16} vb={16} stroke="#111">
              <path d="M1 1v14h14M4 7h2v7H4zM8 4h2v10H8zM12 6h2v8h-2z" />
            </Ic>
          </RailItem>
          <RailItem>
            <Ic s={16} vb={16} stroke="#797775">
              <path d="M.5 1.5h15v13H.5zM.5 5.5h15M.5 10h15M5.5 1.5v13M10.5 1.5v13" />
            </Ic>
          </RailItem>
          <RailItem>
            <Ic s={18} vb={18} stroke="#797775">
              <path d="M1 6h7v6H1zM10 1.5h7v6h-7zM10 11h7v6h-7zM1 9h7M10 4.5h7M10 14h7" />
            </Ic>
          </RailItem>
          <RailItem>
            <Ic s={18} vb={18} stroke="#a19f9d">
              <path d="M3 10V1h8l4 4v8M11 1v4h4" />
              <text x="9" y="15" fontSize="6" fill="#797775" stroke="none" textAnchor="middle">DAX</text>
            </Ic>
          </RailItem>
        </Rail>

        <Center>
          <Banner>
            <Ic s={17} vb={17} stroke="#252423">
              <path d="M8.5 1.5l7.5 14H1zM8.5 6v5M8.5 12.5v1.5" />
            </Ic>
            <BannerText>There are pending changes in your queries that haven't been applied.</BannerText>
            <BannerBtn $w={115}>Apply changes</BannerBtn>
            <BannerBtn $w={121}>Discard changes</BannerBtn>
            <BannerClose><X size={18} strokeWidth={1.2} /></BannerClose>
          </Banner>
          <CanvasRow>
            <Chart />
            <FilterStrip>
              <Ic s={15} vb={15} stroke="#252423">
                <path d="M13 1L5 5H1v4h4l8 4zM5 5v4" />
              </Ic>
              <FilterText>Filters</FilterText>
            </FilterStrip>
          </CanvasRow>
          <PageBar>
            <ViewBtn>
              <Ic s={20} vb={20} stroke="#605e5c">
                <path d="M1 2.5h18v11H1zM10 13.5v3M6 16.5h8" />
              </Ic>
              <ViewMark />
            </ViewBtn>
            <ViewBtn>
              <Ic s={24} vb={24} stroke="#605e5c">
                <path d="M6.5 1h11v21h-11zM11.5 19.5h1" />
              </Ic>
            </ViewBtn>
            <PageNav>
              <Ic s={7} vb={7}><path d="M5 0v7L1 3.5z" fill="#c8c6c4" /></Ic>
              <Ic s={7} vb={7}><path d="M2 0v7l4-3.5z" fill="#c8c6c4" /></Ic>
            </PageNav>
            <PageTab>Page 1</PageTab>
            <AddPage><Plus size={15} strokeWidth={3} /></AddPage>
          </PageBar>
        </Center>

        <Pane>
          <PaneHead>
            Visualizations
            <ChevronsRight size={20} strokeWidth={1.1} />
          </PaneHead>
          <BuildTitle>Build visual</BuildTitle>
          <BuildTabs>
            <BuildTab $w={32} $ml={8} $on>
              <Ic s={26} vb={26} stroke="#252423"><path d="M3 3h18" /><path d="M3 7h18" strokeDasharray="2 1" /></Ic>
            </BuildTab>
            <BuildTab $w={32} $ml={35}>
              <Ic s={26} vb={26} stroke="#484644">
                <path d="M4 20v-8h5M9 20V3h7v8M16 6h4v5" />
                <path d="M10 22l4-6 6-4 1 1-4 6z" fill="#fff" />
              </Ic>
            </BuildTab>
            <BuildTab $w={32} $ml={31}>
              <Ic s={27} vb={27} stroke="#252423">
                <circle cx="12" cy="12" r="10" strokeWidth="1.5" />
                <path d="M19 19l6 6" strokeWidth="2" />
                <path d="M3 12l5-3 4 3 5-4M6 19v-5M10 20v-6M14 20v-5M18 17v-4" />
              </Ic>
            </BuildTab>
          </BuildTabs>
          <VizGrid>
            {VIZ.map((icon, i) =>
              i === 0 ? (
                <VizSelected key={i}><Ic s={18} vb={18}>{icon}</Ic></VizSelected>
              ) : (
                <VizCell key={i}><Ic s={18} vb={18}>{icon}</Ic></VizCell>
              ),
            )}
            <MoreDots>...</MoreDots>
          </VizGrid>
          <Wells>
            <WellTitle $mb={3}>Y-axis</WellTitle>
            <Well $h={36} $mb={11}>
              <Chip>
                <ChipName>species</ChipName>
                <ChipIcons><ChevronDown size={16} strokeWidth={1} /><X size={12} strokeWidth={1.2} /></ChipIcons>
              </Chip>
            </Well>
            <WellTitle $mb={4}>X-axis</WellTitle>
            <Well $h={112} $mb={11}>
              {X_FIELDS.map((f) => (
                <Chip key={f}>
                  <ChipName>{f}</ChipName>
                  <ChipIcons><ChevronDown size={16} strokeWidth={1} /><X size={12} strokeWidth={1.2} /></ChipIcons>
                </Chip>
              ))}
            </Well>
            <WellTitle $mb={5}>Legend</WellTitle>
            <EmptyWell $h={28} $mb={9}>Add data fields here</EmptyWell>
            <WellTitle $mb={5}>Small multiples</WellTitle>
            <EmptyWell $h={28} $mb={0}>Add data fields here</EmptyWell>
          </Wells>
          <ScrollThumb />
        </Pane>

        <Pane>
          <PaneHead>
            Data
            <ChevronsRight size={20} strokeWidth={1.1} />
          </PaneHead>
          <DataSearch>
            <Search size={16} strokeWidth={1.2} color="#484644" />
            Search
          </DataSearch>
          <TreeHead>
            <ChevronDown size={15} strokeWidth={1} color="#605e5c" />
            <TableMark>
              <Ic s={13} vb={13} stroke="#252423">
                <rect x="1" y="1" width="11" height="11" rx="2" />
                <path d="M1 4.5h11M1 8h11M4.5 1v11M8 1v11" />
              </Ic>
              <TableBadge>
                <Ic s={8} vb={8} stroke="#fff"><path d="M1.5 4l2 2 3-3.5" /></Ic>
              </TableBadge>
            </TableMark>
            iris (5)
          </TreeHead>
          {FIELDS.map((f) => (
            <FieldRow key={f}>
              <CheckMark>
                <Ic s={10} vb={10} stroke="#fff"><path d="M1.5 5l2.5 2.5 4.5-5" /></Ic>
              </CheckMark>
              <Sigma>{f !== 'species' ? 'Σ' : ''}</Sigma>
              {f}
            </FieldRow>
          ))}
        </Pane>
      </Body>

      <StatusBar>
        Page 1 of 1
        <ZoomArea>
          <Minus size={9} strokeWidth={2} />
          <ZoomTrack />
          <Plus size={10} strokeWidth={1.6} />
          <ZoomPct>88%</ZoomPct>
          <FitBtn>
            <Ic s={16} vb={16} stroke="#605e5c">
              <path d="M.5 2.5h15v11H.5z" stroke="#8764b8" />
              <path d="M3 7V5h3M10 5h3v2M3 9v2h3M13 9v2h-3" />
            </Ic>
          </FitBtn>
        </ZoomArea>
      </StatusBar>

      <Taskbar>
        <StartBtn>
          <Ic s={17} vb={17}>
            <path d="M0 2.5l7-1v6.5H0zM8 1.4L17 0v8H8zM0 9h7v6.5l-7-1zM8 9h9v8l-9-1.4z" fill="#000" />
          </Ic>
        </StartBtn>
        <TaskSearch>
          <Ic s={17} vb={17} stroke="#111">
            <circle cx="10.5" cy="6.5" r="5" />
            <path d="M7 10l-5.5 5.5" strokeWidth="1.4" />
          </Ic>
          Type here to search
        </TaskSearch>
        <TaskIcon $ml={1} $pr={4}>
          <Ic s={18} vb={18} stroke="#111">
            <path d="M2 1h10M2 17h10M3 5h8v8H3zM15 4h2M15 8h2v1h-2z" strokeWidth="1.4" />
          </Ic>
        </TaskIcon>
        <TaskIcon>
          <Ic s={26} vb={26}>
            <defs>
              <linearGradient id="edgeA" x1="0" y1="0" x2="1" y2="1">
                <stop offset="0" stopColor="#35c1f1" />
                <stop offset="1" stopColor="#0c59a4" />
              </linearGradient>
              <linearGradient id="edgeB" x1="0" y1="0" x2="1" y2="0.5">
                <stop offset="0" stopColor="#2fb5c8" />
                <stop offset="1" stopColor="#5fdc6a" />
              </linearGradient>
            </defs>
            <path d="M13 1C6 1 1 7 1 14c0 6 5 11 12 11 4 0 7-1 9-4-6 2-13-1-13-7 0-3 2-5 5-5 4 0 6 3 6 5h5c2-2 0-4 0-5-1-4-6-8-12-8z" fill="url(#edgeA)" />
            <path d="M23 12c-1-6-6-11-12-10 6 0 10 4 10 8 0 4-4 4-5 4 0-3-1-5-4-5 4-1 8 1 8 5 0 3 3 2 3-2z" fill="url(#edgeB)" />
          </Ic>
        </TaskIcon>
        <TaskIcon $on $pl={2}>
          <Ic s={24} vb={24}>
            <path d="M1 3h8l2 3H1z" fill="#e8a317" />
            <path d="M1 6h22v15H1z" fill="#ffd76a" />
            <path d="M8 14h8v7h-2v-4h-4v4H8z" fill="#2b88d8" />
          </Ic>
        </TaskIcon>
        <TaskIcon $pl={2}>
          <Ic s={24} vb={24}>
            <path d="M1 10L12 1l11 9v13H1z" fill="#0f78d4" />
            <path d="M1 10l11 8 11-8v13H1z" fill="#35b8f1" />
            <path d="M4 9h16v3l-8 5-8-5z" fill="#fff" />
          </Ic>
        </TaskIcon>
        <TaskIcon $pl={2}><Chrome /></TaskIcon>
        <TaskIcon $on $pl={2}><Chrome badge /></TaskIcon>
        <TaskIcon $on $active>
          <Ic s={24} vb={24}>
            <rect x="15" y="1" width="7" height="22" rx="1" fill="#e8a000" />
            <rect x="9" y="7" width="8" height="16" rx="1" fill="#f2c811" />
            <rect x="3" y="13" width="8" height="10" rx="1" fill="#fce58e" />
          </Ic>
        </TaskIcon>
        <Tray>
          <TrayIcon $ml={0}>
            <Ic s={24} vb={24}>
              <circle cx="12" cy="12" r="10" fill="#f7a823" />
              <path d="M1 10h14M2 14h16M4 18h12" stroke="#fff" strokeWidth="1.5" />
              <circle cx="17" cy="6" r="6" fill="#c4312b" />
              <text x="17" y="9" fontSize="8.5" fill="#fff" fontWeight="700" textAnchor="middle">1</text>
            </Ic>
          </TrayIcon>
          <TrayText $ml={8}>32°C</TrayText>
          <TrayText $ml={10}>Haze</TrayText>
          <TrayIcon $ml={24}>
            <Ic s={14} vb={14} stroke="#111"><path d="M1 10l6-6 6 6" strokeWidth="1.3" /></Ic>
          </TrayIcon>
          <TrayIcon $ml={10}>
            <Ic s={16} vb={16} stroke="#111"><path d="M2 5h8v6H2zM10 7l4-2v6l-4-2M4 2h4M4 14h4" /></Ic>
          </TrayIcon>
          <TrayIcon $ml={6}>
            <Ic s={18} vb={18} stroke="#111"><path d="M4 3h13v10H4zM1 1h5v5H1zM10 13v3M6 16h8" /></Ic>
          </TrayIcon>
          <TrayIcon $ml={7}>
            <Ic s={18} vb={18} stroke="#111"><path d="M1 7h3l4-4v12l-4-4H1zM11 6a4 4 0 0 1 0 6M13 4a7 7 0 0 1 0 10M15 2a10 10 0 0 1 0 14" /></Ic>
          </TrayIcon>
          <Clock $w={30} $ml={5}>ENG<br />IN</Clock>
          <Clock $w={66} $ml={2}>3:43 AM<br />10/22/2024</Clock>
          <NoteWrap>
            <Ic s={17} vb={17}>
              <path d="M1 1h15v11H7l-3 4v-4H1z" fill="#000" />
              <path d="M4 4.5h9M4 7h9M4 9.5h6" stroke="#fff" />
            </Ic>
            <NoteBadge>2</NoteBadge>
          </NoteWrap>
        </Tray>
      </Taskbar>

      <Tooltip>Stacked bar chart</Tooltip>
    </Page>
  )
}
